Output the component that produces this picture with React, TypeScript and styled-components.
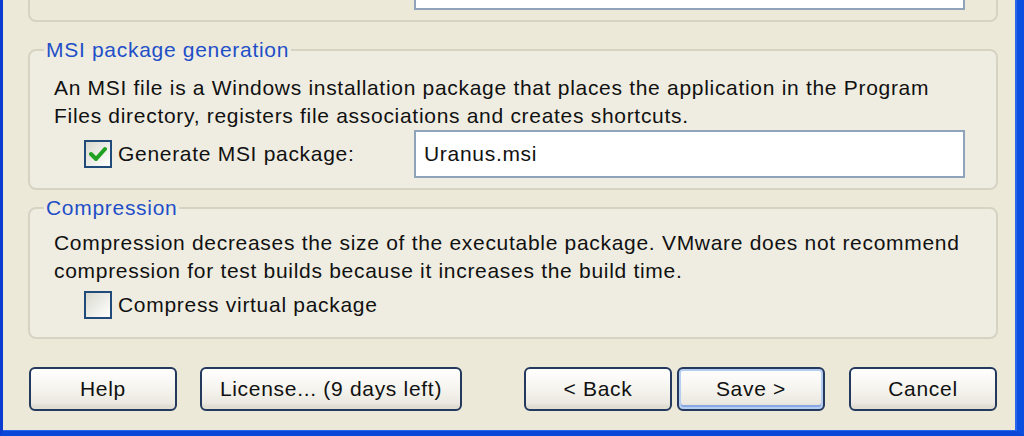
import React from "react";
import styled, { createGlobalStyle } from "styled-components";

const GlobalStyle = createGlobalStyle`
  html, body { margin: 0; padding: 0; background: #ece9d8; }
  #root { width: 1024px; height: 436px; }
`;

const Window = styled.div`
  width: 1024px;
  height: 436px;
  box-sizing: border-box;
  background: #ece9d8;
  border-left: 3px solid #0b3ccf;
  border-right: 7px solid #0b4fe0;
  border-bottom: 5px solid #0a46d8;
  box-shadow: inset -2px 0 0 #2a66ec, inset 0 -1px 0 #2a66ec;
  padding: 0 19px 0 25px;
  display: flex;
  flex-direction: column;
  overflow: hidden;
  font-family: "Liberation Sans", Arial, sans-serif;
  font-size: 21px;
  letter-spacing: 0.7px;
  color: #111;
`;

const GroupTail = styled.div`
  height: 22px;
  box-sizing: border-box;
  border: 2px solid #d6d3c2;
  border-top: none;
  border-radius: 0 0 8px 8px;
  display: flex;
  justify-content: flex-end;
  align-items: flex-start;
  padding-right: 31px;
`;

const TailField = styled.div`
  width: 551px;
  height: 10px;
  box-sizing: border-box;
  background: #fff;
  border: 2px solid #8fa3ba;
  border-top: none;
`;

const Group = styled.fieldset<{ $gap: number; $padTop: number; $padBottom: number }>`
  margin: ${(p) => p.$gap}px 0 0;
  padding: ${(p) => p.$padTop}px 0 ${(p) => p.$padBottom}px 0;
  border: 2px solid #d6d3c2;
  border-radius: 8px;
  min-width: 0;
  background: #efede2;
`;

const Legend = styled.legend`
  margin-left: 14px;
  padding: 0 2px;
  color: #1f4fc7;
  font-size: 21px;
  line-height: 26px;
`;

const Body = styled.div`
  padding-left: 24px;
`;

const Para = styled.p`
  margin: 0;
  line-height: 28px;
`;

const CheckRow = styled.div<{ $height: number }>`
  display: flex;
  align-items: center;
  height: ${(p) => p.$height}px;
  padding-left: 54px;
`;

const CheckLabel = styled.label<{ $width?: number }>`
  display: flex;
  align-items: center;
  gap: 6px;
  width: ${(p) => (p.$width ? `${p.$width}px` : "auto")};
  flex: none;
`;

const Box = styled.span`
  width: 28px;
  height: 28px;
  box-sizing: border-box;
  border: 2px solid #1f4a7a;
  background: linear-gradient(135deg, #d9d8d0 0%, #f4f4f0 70%, #ffffff 100%);
  display: inline-flex;
  align-items: center;
  justify-content: center;
  flex: none;
`;

const TextField = styled.div`
  width: 551px;
  height: 48px;
  box-sizing: border-box;
  background: #fff;
  border: 2px solid #8fa3ba;
  display: flex;
  align-items: center;
  padding-left: 8px;
`;

const ButtonBar = styled.div`
  display: flex;
  justify-content: space-between;
  margin-top: 28px;
  padding: 0 1px;
`;

const ButtonGroup = styled.div<{ $gap: number }>`
  display: flex;
  gap: ${(p) => p.$gap}px;
`;

const Button = styled.button<{ $width?: number; $default?: boolean; $ml?: number }>`
  width: ${(p) => p.$width ?? 148}px;
  height: 44px;
  margin-left: ${(p) => p.$ml ?? 0}px;
  box-sizing: border-box;
  border: 2px solid #23395e;
  border-radius: 6px;
  background: linear-gradient(180deg, #ffffff 0%, #f6f5f0 45%, #ebe9e1 85%, #d8d4c8 100%);
  box-shadow: ${(p) =>
    p.$default
      ? "inset 0 0 0 2px #b6cdf2, inset 0 -2px 0 2px #8aa9e4"
      : "inset 0 -2px 0 #e0ddd3"};
  font-family: "Liberation Sans", Arial, sans-serif;
  font-size: 21px;
  letter-spacing: 0.7px;
  color: #111;
  padding: 0;
`;

const Check = () => (
  <svg width="18" height="16" viewBox="0 0 18 16">
    <polyline points="2,8 7,13 16,3" fill="none" stroke="#21a121" strokeWidth="4" strokeLinecap="round" strokeLinejoin="round" />
  </svg>
);

export default function App() {
  return (
    <>
      <GlobalStyle />
      <Window>
        <GroupTail>
          <TailField />
        </GroupTail>

        <Group $gap={15} $padTop={11} $padBottom={10}>
          <Legend>MSI package generation</Legend>
          <Body>
            <Para>
              An MSI file is a Windows installation package that places the application in the Program
              <br />
              Files directory, registers file associations and creates shortcuts.
            </Para>
          </Body>
          <CheckRow $height={48}>
            <CheckLabel $width={330}>
              <Box>
                <Check />
              </Box>
              Generate MSI package:
            </CheckLabel>
            <TextField>Uranus.msi</TextField>
          </CheckRow>
        </Group>

        <Group $gap={5} $padTop={8} $padBottom={12}>
          <Legend>Compression</Legend>
          <Body>
            <Para>
              Compression decreases the size of the executable package. VMware does not recommend
              <br />
              compression for test builds because it increases the build time.
            </Para>
          </Body>
          <CheckRow $height={40}>
            <CheckLabel>
              <Box />
              Compress virtual package
            </CheckLabel>
          </CheckRow>
        </Group>

        <ButtonBar>
          <ButtonGroup $gap={23}>
            <Button>Help</Button>
            <Button $width={262}>License... (9 days left)</Button>
          </ButtonGroup>
          <ButtonGroup $gap={5}>
            <Button>&lt; Back</Button>
            <Button $default>Save &gt;</Button>
            <Button $ml={19}>Cancel</Button>
          </ButtonGroup>
        </ButtonBar>
      </Window>
    </>
  );
}
